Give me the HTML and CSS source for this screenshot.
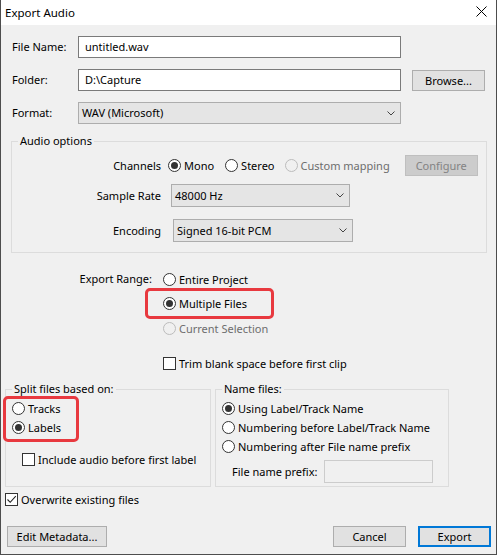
FILE: index.html
```html
<!DOCTYPE html>
<html>
<head>
<meta charset="utf-8">
<link rel="stylesheet" href="styles.css">
</head>
<body>
<div class="window">
  <div class="titlebar">
    <span class="title">Export Audio</span>
    <svg class="close" width="11" height="11" viewBox="0 0 11 11"><path d="M0.5 0.5 L10.5 10.5 M10.5 0.5 L0.5 10.5" stroke="#000" stroke-width="1"/></svg>
  </div>
  <div class="body">
    <div class="filegrid">
      <span class="flabel">File Name:</span>
      <div class="input">untitled.wav</div>
      <span></span>
      <span class="flabel">Folder:</span>
      <div class="input">D:\Capture</div>
      <div class="btn browse">Browse...</div>
      <span class="flabel">Format:</span>
      <div class="select">WAV (Microsoft)<svg class="chev" width="8" height="5" viewBox="0 0 8 5"><path d="M0.5 0.5 L4 4 L7.5 0.5" fill="none" stroke="#444" stroke-width="1"/></svg></div>
      <span></span>
    </div>

    <fieldset class="group audio">
      <legend>Audio options</legend>
      <div class="aogrid">
        <span class="rlabel">Channels</span>
        <div class="chrow">
          <span class="opt"><span class="radio on"></span>Mono</span>
          <span class="opt stereo"><span class="radio"></span>Stereo</span>
          <span class="opt custom disabled"><span class="radio"></span>Custom mapping</span>
          <div class="btn configure">Configure</div>
        </div>
        <span class="rlabel sr-l">Sample Rate</span>
        <div class="select sr">48000 Hz<svg class="chev" width="8" height="5" viewBox="0 0 8 5"><path d="M0.5 0.5 L4 4 L7.5 0.5" fill="none" stroke="#444" stroke-width="1"/></svg></div>
        <span class="rlabel enc-l">Encoding</span>
        <div class="select enc">Signed 16-bit PCM<svg class="chev" width="8" height="5" viewBox="0 0 8 5"><path d="M0.5 0.5 L4 4 L7.5 0.5" fill="none" stroke="#444" stroke-width="1"/></svg></div>
      </div>
    </fieldset>

    <div class="range">
      <span class="rangelabel">Export Range:</span>
      <div class="rangeopts">
        <span class="opt"><span class="radio"></span>Entire Project</span>
        <span class="opt mark"><span class="radio on"></span>Multiple Files<span class="redbox box1"></span></span>
        <span class="opt disabled"><span class="radio"></span>Current Selection</span>
        <span class="opt trim"><span class="check"></span>Trim blank space before first clip</span>
      </div>
    </div>

    <div class="groups">
      <fieldset class="group split">
        <legend>Split files based on:</legend>
        <div class="splitopts">
          <span class="redbox box2"></span>
          <span class="opt"><span class="radio"></span>Tracks</span>
          <span class="opt"><span class="radio on"></span>Labels</span>
        </div>
        <span class="opt include"><span class="check"></span>Include audio before first label</span>
      </fieldset>
      <fieldset class="group names">
        <legend>Name files:</legend>
        <span class="opt"><span class="radio on"></span>Using Label/Track Name</span>
        <span class="opt"><span class="radio"></span>Numbering before Label/Track Name</span>
        <span class="opt"><span class="radio"></span>Numbering after File name prefix</span>
        <div class="prefix">
          <span>File name prefix:</span>
          <div class="input dis"></div>
        </div>
      </fieldset>
    </div>

    <span class="opt overwrite"><span class="check on"><svg width="11" height="11" viewBox="0 0 11 11"><path d="M1.5 5.5 L4.2 8.3 L9.8 2.2" fill="none" stroke="#222" stroke-width="1.1"/></svg></span>Overwrite existing files</span>

    <div class="buttons">
      <div class="btn meta">Edit Metadata...</div>
      <div class="spacer"></div>
      <div class="btn cancel">Cancel</div>
      <div class="btn export">Export</div>
    </div>
  </div>
</div>
</body>
</html>
```

FILE: styles.css
```css
html, body {
  margin: 0;
  padding: 0;
  background: #f0f0f0;
}
.window {
  width: 497px;
  height: 555px;
  box-sizing: border-box;
  border: 1px solid #4d4d4d;
  border-top: none;
  background: #f0f0f0;
  font-family: "Noto Sans", "Open Sans", sans-serif;
  font-size: 11px;
  color: #000;
  overflow: hidden;
}
.titlebar {
  height: 25px;
  background: #fff;
  display: flex;
  align-items: center;
  padding-left: 4px;
  padding-right: 9px;
}
.title {
  font-size: 11.5px;
  flex: 1;
  margin-top: -1px;
}
.close {
  margin-top: -2px;
}
.body {
  display: flex;
  flex-direction: column;
}
.filegrid {
  margin-top: 11px;
  padding-left: 11px;
  display: grid;
  grid-template-columns: 55px 323px 73px;
  grid-auto-rows: 22px;
  column-gap: 11px;
  row-gap: 11px;
  align-items: center;
}
.flabel {
  line-height: 22px;
}
.input {
  height: 22px;
  box-sizing: border-box;
  border: 1px solid #7a7a7a;
  background: #fff;
  padding-left: 6px;
  line-height: 20px;
}
.input.dis {
  border-color: #cccccc;
  background: #f0f0f0;
}
.select {
  height: 22px;
  box-sizing: border-box;
  border: 1px solid #adadad;
  background: #e5e5e5;
  padding-left: 3px;
  line-height: 20px;
  display: flex;
  align-items: center;
  justify-content: space-between;
  padding-right: 5px;
}
.btn {
  height: 21px;
  box-sizing: border-box;
  border: 1px solid #adadad;
  background: #e1e1e1;
  display: flex;
  align-items: center;
  justify-content: center;
}
.browse {
  height: 21px;
  width: 73px;
}
.group {
  margin: 0;
  padding: 0;
  border: 1px solid #dcdcdc;
  min-width: 0;
}
.group legend {
  padding: 0 2px;
  margin-left: 6px;
  line-height: 16px;
}
.audio {
  margin: 9px 9px 0 10px;
  padding: 6px 0 10px 0;
}
.aogrid {
  display: grid;
  grid-template-columns: 149px auto;
  column-gap: 7px;
  align-items: center;
}
.rlabel {
  text-align: right;
}
.sr-l {
  margin-top: 8px;
}
.enc-l {
  margin-top: 12px;
}
.chrow {
  display: flex;
  align-items: center;
  height: 21px;
}
.opt {
  display: flex;
  align-items: center;
  gap: 3px;
  white-space: nowrap;
}
.radio {
  width: 13px;
  height: 13px;
  box-sizing: border-box;
  border: 1px solid #333;
  border-radius: 50%;
  background: #fff;
  display: inline-flex;
  align-items: center;
  justify-content: center;
  flex: none;
}
.radio.on::after {
  content: "";
  width: 7px;
  height: 7px;
  border-radius: 50%;
  background: #333;
}
.disabled {
  color: #6d6d6d;
}
.disabled .radio {
  border-color: #bcbcbc;
  background: #f0f0f0;
}
.stereo {
  margin-left: 11px;
}
.custom {
  margin-left: 10px;
}
.configure {
  margin-left: 15px;
  width: 73px;
  background: #cccccc;
  border-color: #bfbfbf;
  color: #838383;
}
.sr {
  margin-top: 8px;
  margin-left: 3px;
  width: 179px;
  height: 23px;
}
.enc {
  margin-top: 12px;
  margin-left: 5px;
  width: 180px;
  height: 23px;
}
.range {
  display: flex;
  margin-top: 16px;
}
.rangelabel {
  width: 151px;
  text-align: right;
  line-height: 20px;
  flex: none;
}
.rangeopts {
  margin-left: 11px;
  display: flex;
  flex-direction: column;
}
.rangeopts .opt {
  height: 20px;
}
.rangeopts .opt + .opt {
  margin-top: 4.5px;
}
.rangeopts .trim {
  margin-top: 15px !important;
}
.mark {
  position: relative;
}
.redbox {
  position: absolute;
  border: 3px solid #e8393f;
  border-radius: 5px;
  box-sizing: border-box;
  pointer-events: none;
}
.box1 {
  left: -18px;
  top: -6px;
  width: 129px;
  height: 31px;
}
.check {
  width: 13px;
  height: 13px;
  box-sizing: border-box;
  border: 1px solid #333;
  background: #fff;
  flex: none;
  display: inline-flex;
  align-items: center;
  justify-content: center;
}
.groups {
  display: flex;
  margin-top: 8px;
  padding-left: 4px;
  gap: 4px;
}
.split {
  width: 206px;
  height: 106px;
  box-sizing: border-box;
  padding: 2px 0 0 6px;
}
.names {
  width: 234px;
  height: 106px;
  box-sizing: border-box;
  padding: 2px 0 0 6px;
  display: flex;
  flex-direction: column;
}
.split legend, .names legend {
  margin-left: 0;
}
.splitopts {
  position: relative;
  display: flex;
  flex-direction: column;
}
.split .opt, .names .opt {
  height: 19px;
}
.box2 {
  left: -9px;
  top: -3px;
  width: 76px;
  height: 46px;
}
.include {
  margin-left: 10px;
  margin-top: 13px;
}
.prefix {
  display: flex;
  align-items: center;
  margin-left: 10px;
  margin-top: 4px;
}
.prefix .input {
  margin-left: 7px;
  width: 109px;
  height: 23px;
}
.overwrite {
  margin-left: 4px;
  margin-top: 5px;
  height: 15px;
}
.buttons {
  display: flex;
  margin-top: 19px;
  padding-left: 6px;
  padding-right: 5px;
}
.spacer {
  flex: 1;
}
.meta {
  width: 100px;
}
.cancel {
  width: 73px;
}
.export {
  width: 73px;
  margin-left: 12px;
  border: 2px solid #0078d7;
}
```
